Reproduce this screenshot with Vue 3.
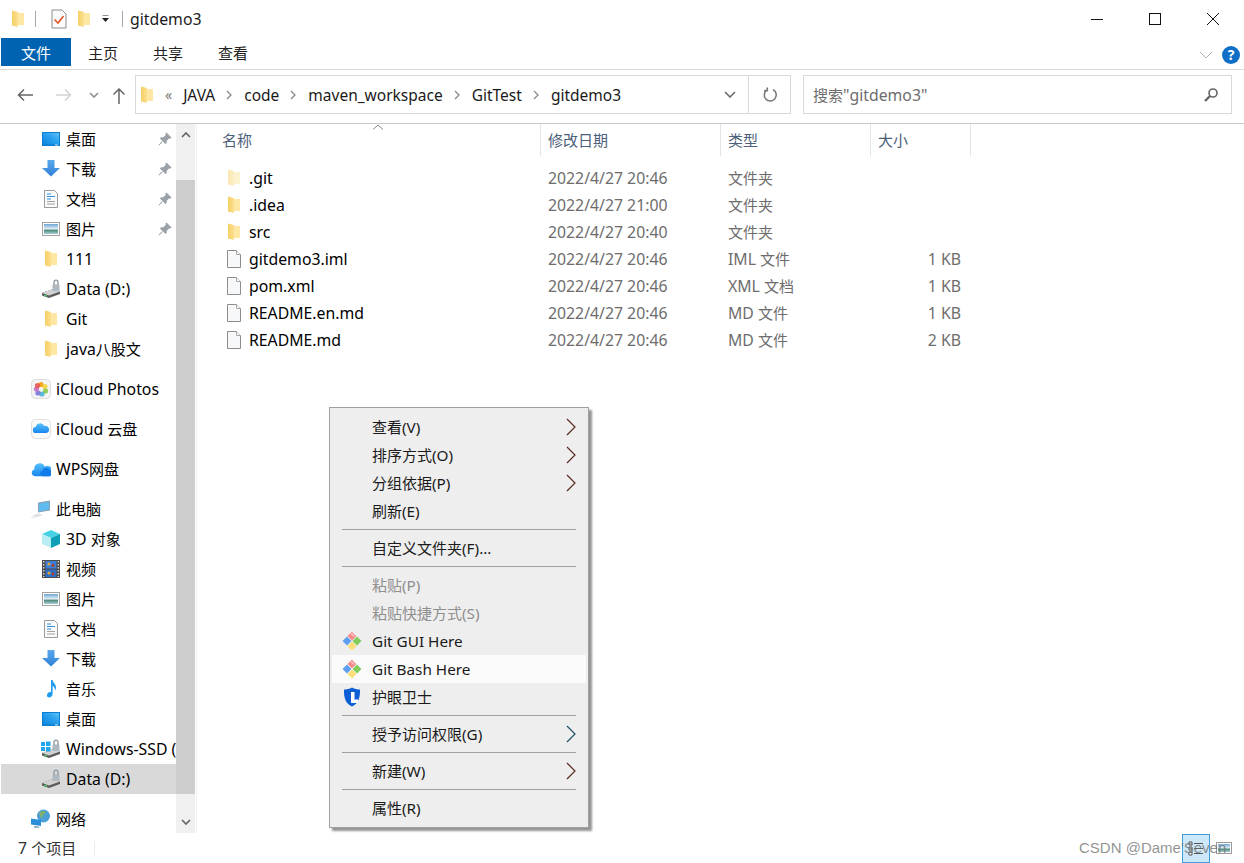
<script setup>
import { h } from "vue";

// latin glyphs are a touch bigger than the CJK ones in the original, so split runs
const T = (props) =>
  (props.s.match(/[\u4e00-\u9fff]+|[^\u4e00-\u9fff]+/g) || []).map((p) =>
    h("span", { class: /[\u4e00-\u9fff]/.test(p) ? "cjk" : "lat" }, p)
  );
T.props = ["s"];

const crumbs = ["JAVA", "code", "maven_workspace", "GitTest", "gitdemo3"];

const navGroups = [
  [
    { label: "桌面", icon: "desktop", indent: 1, pin: true },
    { label: "下载", icon: "down", indent: 1, pin: true },
    { label: "文档", icon: "doc", indent: 1, pin: true },
    { label: "图片", icon: "pic", indent: 1, pin: true },
    { label: "111", icon: "folder", indent: 1 },
    { label: "Data (D:)", icon: "drive", indent: 1 },
    { label: "Git", icon: "folder", indent: 1 },
    { label: "java八股文", icon: "folder", indent: 1 },
  ],
  [{ label: "iCloud Photos", icon: "photos" }],
  [{ label: "iCloud 云盘", icon: "icloud" }],
  [{ label: "WPS网盘", icon: "wps" }],
  [
    { label: "此电脑", icon: "pc" },
    { label: "3D 对象", icon: "cube", indent: 1 },
    { label: "视频", icon: "film", indent: 1 },
    { label: "图片", icon: "pic", indent: 1 },
    { label: "文档", icon: "doc", indent: 1 },
    { label: "下载", icon: "down", indent: 1 },
    { label: "音乐", icon: "music", indent: 1 },
    { label: "桌面", icon: "desktop", indent: 1 },
    { label: "Windows-SSD (C:)", icon: "windrive", indent: 1 },
    { label: "Data (D:)", icon: "drive", indent: 1, selected: true },
  ],
  [{ label: "网络", icon: "network" }],
];

const columns = ["名称", "修改日期", "类型", "大小"];

const files = [
  { name: ".git", date: "2022/4/27 20:46", type: "文件夹", icon: "folder", faded: true },
  { name: ".idea", date: "2022/4/27 21:00", type: "文件夹", icon: "folder" },
  { name: "src", date: "2022/4/27 20:40", type: "文件夹", icon: "folder" },
  { name: "gitdemo3.iml", date: "2022/4/27 20:46", type: "IML 文件", size: "1 KB", icon: "file" },
  { name: "pom.xml", date: "2022/4/27 20:46", type: "XML 文档", size: "1 KB", icon: "file" },
  { name: "README.en.md", date: "2022/4/27 20:46", type: "MD 文件", size: "1 KB", icon: "file" },
  { name: "README.md", date: "2022/4/27 20:46", type: "MD 文件", size: "2 KB", icon: "file" },
];

const menu = [
  { label: "查看(V)", sub: "warm" },
  { label: "排序方式(O)", sub: "warm" },
  { label: "分组依据(P)", sub: "warm" },
  { label: "刷新(E)" },
  { sep: true },
  { label: "自定义文件夹(F)..." },
  { sep: true },
  { label: "粘贴(P)", disabled: true },
  { label: "粘贴快捷方式(S)", disabled: true },
  { label: "Git GUI Here", icon: "git" },
  { label: "Git Bash Here", icon: "git", hover: true },
  { label: "护眼卫士", icon: "shield" },
  { sep: true },
  { label: "授予访问权限(G)", sub: "cool" },
  { sep: true },
  { label: "新建(W)", sub: "warm" },
  { sep: true },
  { label: "属性(R)" },
];
</script>

<template>
  <div class="win">
    <svg class="defs" width="0" height="0" aria-hidden="true">
      <defs>
        <linearGradient id="gBlue" x1="0" y1="0" x2="0" y2="1">
          <stop offset="0" stop-color="#5aa9ec" />
          <stop offset="1" stop-color="#2f7fd8" />
        </linearGradient>
        <linearGradient id="gDesk" x1="0" y1="1" x2="1" y2="0">
          <stop offset="0" stop-color="#0b84dc" />
          <stop offset="0.6" stop-color="#2ea4f0" />
          <stop offset="1" stop-color="#62c0f6" />
        </linearGradient>
        <linearGradient id="gPic" x1="0" y1="0" x2="0" y2="1">
          <stop offset="0" stop-color="#6ea7d6" />
          <stop offset="0.5" stop-color="#e4eef5" />
          <stop offset="0.62" stop-color="#4d8a7a" />
          <stop offset="1" stop-color="#a9cfd6" />
        </linearGradient>
        <linearGradient id="gFold" x1="0" y1="0" x2="1" y2="0">
          <stop offset="0" stop-color="#f6cf66" />
          <stop offset="1" stop-color="#fbe08e" />
        </linearGradient>
        <linearGradient id="gCloud" x1="0" y1="0" x2="0" y2="1">
          <stop offset="0" stop-color="#55c0fa" />
          <stop offset="1" stop-color="#1a86ee" />
        </linearGradient>
      </defs>
      <symbol id="i-folder" viewBox="0 0 20 20">
        <path d="M9 4h7v12H9z" fill="#fde7a3" />
        <path d="M4 1.500 10 3v15l-6-1.500z" fill="url(#gFold)" />
      </symbol>
      <symbol id="i-file" viewBox="0 0 20 20">
        <path d="M3.500 1.500h9l4 4v13h-13z" fill="#f7f8f9" stroke="#8d8d8d" />
        <path d="M12.500 1.500v4h4" fill="#fff" stroke="#a5a5a5" />
      </symbol>
      <symbol id="i-desktop" viewBox="0 0 20 20">
        <rect x="1" y="3" width="18" height="14" fill="#0d7fd2" />
        <rect x="2" y="4" width="16" height="11.500" fill="url(#gDesk)" />
        <path d="M14 16h3" stroke="#cfe9fb" />
      </symbol>
      <symbol id="i-down" viewBox="0 0 20 20">
        <path d="M6.500 1h7v8H19l-9 8.500L1 9h5.500z" fill="url(#gBlue)" />
      </symbol>
      <symbol id="i-doc" viewBox="0 0 20 20">
        <path d="M3.500 1.500h10l3 3v14h-13z" fill="#fbfbfb" stroke="#9a9a9a" />
        <path d="M6 5h4M6 7.500h8M6 10h4" stroke="#2f92e0" stroke-width="1.200" />
        <path d="M6 12.500h8M6 15h8" stroke="#a0a0a0" />
      </symbol>
      <symbol id="i-pic" viewBox="0 0 20 20">
        <rect x="1.500" y="3.500" width="17" height="13" fill="#fff" stroke="#a2a2a2" />
        <rect x="3" y="5" width="14" height="10" fill="url(#gPic)" />
      </symbol>
      <symbol id="i-drive" viewBox="0 0 20 20">
        <path d="M1 14 12 10l7 2.500v2.500L8 19l-7-2.500z" fill="#5c5c5c" />
        <path d="M1 14 12 10l7 2.500L8 16.500z" fill="#d2d2d2" />
        <rect x="3" y="16" width="3" height="1.500" fill="#4fc25f" />
        <rect x="11.500" y="5.500" width="7" height="6.500" rx="1" fill="#aeb8c0" />
        <path d="M13 6V3.200a2 2 0 0 1 4 0V6" fill="none" stroke="#8d979f" stroke-width="1.300" />
      </symbol>
      <symbol id="i-windrive" viewBox="0 0 20 20">
        <use href="#i-drive" width="20" height="20" />
        <path d="M0 3h4v4H0zM5 2.500h4.500V7H5zM0 8h4v4H0zM5 8h4.500v4.500H5z" fill="#22a5ee" />
      </symbol>
      <symbol id="i-photos" viewBox="0 0 20 20">
        <rect x="0.500" y="0.500" width="19" height="19" rx="4" fill="#f4f4f4" stroke="#dddddd" />
        <circle cx="10" cy="5.500" r="2.600" fill="#f6a623" />
        <circle cx="14" cy="7.500" r="2.600" fill="#f3d43c" opacity=".9" />
        <circle cx="14.500" cy="12" r="2.600" fill="#8cc84b" opacity=".9" />
        <circle cx="11" cy="15" r="2.600" fill="#49b6d6" opacity=".9" />
        <circle cx="7" cy="14" r="2.600" fill="#7b76d8" opacity=".9" />
        <circle cx="5.500" cy="10" r="2.600" fill="#c66bc0" opacity=".9" />
        <circle cx="6.500" cy="6.500" r="2.600" fill="#e9534f" opacity=".9" />
      </symbol>
      <symbol id="i-icloud" viewBox="0 0 20 20">
        <rect x="0.500" y="0.500" width="19" height="19" rx="4" fill="#fafafa" stroke="#e0e0e0" />
        <path d="M5 14a3 3 0 0 1-.3-6 4.500 4.500 0 0 1 8.500-1 3.600 3.600 0 0 1 2.300 7z" fill="url(#gCloud)" />
      </symbol>
      <symbol id="i-wps" viewBox="0 2 17.500 15.500">
        <path d="M3.500 16a3 3 0 0 1-.6-5.900A4.800 4.800 0 0 1 12 7.500a4.300 4.300 0 0 1 4.500 8.500z" fill="url(#gCloud)" />
        <path d="M10 16a2.600 2.600 0 0 1 0-5 3.500 3.500 0 0 1 6.600-.3A2.800 2.800 0 0 1 16.500 16z" fill="#0f7ce8" />
      </symbol>
      <symbol id="i-pc" viewBox="0 0 20 20">
        <path d="M7 3.500 19 1.500v10L7 13.500z" fill="#8aa2b4" />
        <path d="M8 4.500 18 3v7.500L8 12.500z" fill="#5fbcf0" />
        <path d="M1 16.500 8 14.500l4 1.500-7 2.500z" fill="#dde1e5" />
        <path d="M0 18h3.500v1H0z" fill="#e6e6e6" />
      </symbol>
      <symbol id="i-cube" viewBox="0 0 20 20">
        <path d="M10 1 19 5 10 9 1 5z" fill="#46d2e4" />
        <path d="M1 5 10 9v10l-9-4z" fill="#b8eef3" />
        <path d="M19 5 10 9v10l9-4z" fill="#0e9fb8" />
      </symbol>
      <symbol id="i-film" viewBox="0 0 20 20">
        <rect x="1" y="1" width="18" height="18" fill="#4a4a4a" />
        <rect x="4.500" y="2" width="11" height="7.500" fill="#3c7fd8" />
        <rect x="4.500" y="10.500" width="11" height="7.500" fill="#2e6fc6" />
        <circle cx="8" cy="5" r="1.600" fill="#e2a23a" />
        <circle cx="12" cy="6.500" r="1.400" fill="#b23a2a" />
        <circle cx="8" cy="14" r="1.600" fill="#e2a23a" />
        <circle cx="12" cy="15" r="1.400" fill="#b23a2a" />
        <path d="M2.700 2v16M17.300 2v16" stroke="#d5d5d5" stroke-dasharray="1.500 1.500" stroke-width="1.400" />
      </symbol>
      <symbol id="i-music" viewBox="0 0 20 20">
        <path d="M10 1h1.600c.4 3 3.400 4 3.400 7.500 0 1-.3 2-1 3 .1-3-1.700-4.300-2.400-4.800V15c0 2.200-1.700 3.500-3.500 3.500S6 17.500 6 16s1.500-3 3-3c.4 0 .7 0 1 .2z" fill="#1f9cf0" />
      </symbol>
      <symbol id="i-network" viewBox="0 0 20 20">
        <circle cx="12.500" cy="7" r="6.500" fill="#4b9fd8" />
        <path d="M9 3c2-1.500 5-1 6 0-1 2-3 2-3 4s-3 2-3 0-2-2 0-4z" fill="#7fb06f" />
        <path d="M0 9.500 10 11v6l-10-1.500z" fill="#2a8fd8" />
        <path d="M3 17h4l2 2H3z" fill="#9cb6c8" />
      </symbol>
      <symbol id="i-pin" viewBox="0 0 14 14">
        <path d="M8.500.5 13.500 5.500 12.300 6.700 11.300 6.200 8.800 8.700 8.700 11 7.500 12.100 1.900 6.500 3 5.300 5.300 5.200 7.800 2.700 7.300 1.700z" fill="#9aa1a8" />
        <path d="M4 9.800 .8 13.200 4.200 10z" fill="#9aa1a8" stroke="#9aa1a8" />
      </symbol>
      <symbol id="i-git" viewBox="0 0 20 20">
        <path d="M10 .5 14.500 5 10 9.500 5.500 5z" fill="#f58a8a" />
        <path d="M9 2.500l3 3M11 1.500l3 3" stroke="#fff" stroke-width="1" />
        <path d="M5 5.500 9.500 10 5 14.500.5 10z" fill="#5e9ff2" />
        <path d="M15 5.500 19.500 10 15 14.500 10.500 10z" fill="#80cc5c" />
        <path d="M10 10.500 14.500 15 10 19.500 5.500 15z" fill="#fbdf78" />
      </symbol>
      <symbol id="i-shield" viewBox="0 0 20 20">
        <path d="M10 .5c2.500 1.500 5.500 2 8 2 .3 8-1.500 14-8 17-6.500-3-8.300-9-8-17 2.500 0 5.500-.5 8-2z" fill="#0d5fd6" />
        <path d="M9 5h3.500v7.500H16V16H9z" fill="#fff" />
      </symbol>
    </svg>

    <header class="titlebar">
      <svg class="qa-folder"><use href="#i-folder" /></svg>
      <i class="vline first"></i>
      <svg class="qa-check" viewBox="0 0 16 20">
        <path d="M1 1h10l4 4v14H1z" fill="#fbfbfb" stroke="#8c8c8c" />
        <path d="M3.500 10.500 7 14l5.500-7" fill="none" stroke="#e2542a" stroke-width="1.700" />
      </svg>
      <svg class="qa-folder second"><use href="#i-folder" /></svg>
      <svg class="qa-drop" viewBox="0 0 9 8">
        <path d="M1.500 0h6" stroke="#222" />
        <path d="M1 3h7L4.500 7z" fill="#222" />
      </svg>
      <i class="vline"></i>
      <span class="wintitle">gitdemo3</span>
      <div class="caption">
        <svg viewBox="0 0 14 14"><path d="M1 7.500h12" stroke="#111" fill="none" /></svg>
        <svg viewBox="0 0 14 14"><rect x="1.500" y="1.500" width="11" height="11" stroke="#111" fill="none" /></svg>
        <svg viewBox="0 0 14 14"><path d="M1 1l12 12M13 1 1 13" stroke="#111" fill="none" /></svg>
      </div>
    </header>

    <div class="ribbon">
      <span class="tab file"><T s="文件" /></span>
      <span class="tab home"><T s="主页" /></span>
      <span class="tab"><T s="共享" /></span>
      <span class="tab"><T s="查看" /></span>
      <svg class="collapse" viewBox="0 0 14 8"><path d="M1 1l6 6 6-6" fill="none" stroke="#b4b4b4" /></svg>
      <span class="help">?</span>
    </div>

    <div class="addressrow">
      <svg class="nav-btn back" viewBox="0 0 16 14"><path d="M16 7H2M7 1.500 1.500 7 7 12.500" fill="none" stroke="#666" stroke-width="1.500" /></svg>
      <svg class="nav-btn fwd" viewBox="0 0 16 14"><path d="M0 7h14M9 1.500 14.500 7 9 12.500" fill="none" stroke="#d2d2d2" stroke-width="1.500" /></svg>
      <svg class="nav-btn drop" viewBox="0 0 10 6"><path d="M1 1l4 4 4-4" fill="none" stroke="#8a8a8a" stroke-width="1.500" /></svg>
      <svg class="nav-btn up" viewBox="0 0 14 17"><path d="M7 17V2M1.500 7.500 7 2l5.500 5.500" fill="none" stroke="#666" stroke-width="1.500" /></svg>
      <div class="addrbox">
        <svg class="addr-folder"><use href="#i-folder" /></svg>
        <span class="overflow">«</span>
        <template v-for="(c, i) in crumbs" :key="c">
          <span class="crumb">{{ c }}</span>
          <svg v-if="i < crumbs.length - 1" class="crumbsep" viewBox="0 0 6 10"><path d="M1 1l4 4-4 4" fill="none" stroke="#8a8a8a" stroke-width="1.300" /></svg>
        </template>
        <span class="grow"></span>
        <svg class="addr-drop" viewBox="0 0 12 7"><path d="M1 1l5 5 5-5" fill="none" stroke="#666" stroke-width="1.500" /></svg>
        <span class="refresh">
          <svg viewBox="0 0 16 16"><path d="M5.200 2.800A6 6 0 1 0 11 2.600M5.300.5v3.200H2" fill="none" stroke="#7a7a7a" stroke-width="1.600" /></svg>
        </span>
      </div>
      <div class="searchbox">
        <span class="placeholder"><T s='搜索"gitdemo3"' /></span>
        <svg viewBox="0 0 16 16"><circle cx="10" cy="6" r="4" fill="none" stroke="#666" stroke-width="1.600" /><path d="M7 9l-5 5" stroke="#666" stroke-width="2.400" /></svg>
      </div>
    </div>

    <main class="body">
      <aside class="side">
        <nav class="tree">
          <div v-for="(group, g) in navGroups" :key="g" class="group">
            <div
              v-for="item in group"
              :key="item.label"
              class="treerow"
              :class="{ indent: item.indent, selected: item.selected }"
            >
              <svg class="treeicon"><use :href="'#i-' + item.icon" /></svg>
              <span class="treelabel"><T :s="item.label" /></span>
              <svg v-if="item.pin" class="pin"><use href="#i-pin" /></svg>
            </div>
          </div>
        </nav>
        <div class="scrollbar">
          <div class="sb-btn top"><svg viewBox="0 0 10 6"><path d="M1 5l4-4 4 4" fill="none" stroke="#606060" stroke-width="1.600" /></svg></div>
          <div class="thumb"></div>
          <div class="sb-btn bottom"><svg viewBox="0 0 10 6"><path d="M1 1l4 4 4-4" fill="none" stroke="#606060" stroke-width="1.600" /></svg></div>
        </div>
      </aside>

      <section class="list">
        <div class="listhead">
          <div v-for="c in columns" :key="c" class="col"><T :s="c" /></div>
          <svg class="sortcaret" viewBox="0 0 12 6"><path d="M1 5.500 6 1l5 4.500" fill="none" stroke="#8a8a8a" /></svg>
        </div>
        <div v-for="f in files" :key="f.name" class="filerow">
          <div class="fname">
            <svg class="fileicon" :class="{ faded: f.faded }"><use :href="'#i-' + f.icon" /></svg>
            <span>{{ f.name }}</span>
          </div>
          <div class="dim">{{ f.date }}</div>
          <div class="dim"><T :s="f.type" /></div>
          <div class="dim fsize">{{ f.size }}</div>
        </div>
      </section>
    </main>

    <footer class="status">
      <span class="count"><T s="7 个项目" /></span>
      <i class="statussep"></i>
      <span class="grow"></span>
      <span class="viewbtn on">
        <svg viewBox="0 0 16 16"><path d="M1 2h3v3H1zM1 7h3v3H1zM1 12h3v3H1z" fill="#fff" stroke="#555" /><path d="M6 3.500h9M6 8.500h9M6 13.500h9" stroke="#555" /></svg>
      </span>
      <span class="viewbtn">
        <svg viewBox="0 0 16 16"><rect x="0.500" y="2.500" width="15" height="11" fill="#fff" stroke="#999" /><rect x="2" y="4" width="12" height="8" fill="url(#gPic)" /></svg>
      </span>
    </footer>

    <div class="ctxmenu">
      <template v-for="(m, i) in menu" :key="i">
        <div v-if="m.sep" class="menusep"></div>
        <div v-else class="menuitem" :class="{ disabled: m.disabled, hover: m.hover }">
          <svg v-if="m.icon" class="menuicon"><use :href="'#i-' + m.icon" /></svg>
          <span class="menulabel"><T :s="m.label" /></span>
          <svg v-if="m.sub" class="submark" :class="m.sub" viewBox="0 0 10 18"><path d="M1 1l8 8-8 8" fill="none" stroke-width="1.200" /></svg>
        </div>
      </template>
    </div>

    <div class="watermark">CSDN @Dame'Seven</div>
  </div>
</template>

<style>
body {
  margin: 0;
  background: #fff;
}
.lat {
  font-size: 15.8px;
}
.cjk {
  font-size: 15px;
}
.ctxmenu .lat {
  font-size: 15.3px;
}
</style>

<style scoped>
.win {
  position: relative;
  width: 1244px;
  height: 863px;
  overflow: hidden;
  display: flex;
  flex-direction: column;
  background: #fff;
  color: #000;
  font-family: "Noto Sans", "Noto Sans CJK SC", sans-serif;
  font-size: 15.8px;
  line-height: 20px;
}

.defs {
  position: absolute;
}

.grow {
  flex: 1;
}

/* title bar */
.titlebar {
  height: 38px;
  display: flex;
  align-items: center;
  flex-shrink: 0;
  padding-left: 8px;
  color: #1a1a1a;
}

.qa-folder {
  width: 20px;
  height: 20px;
}

.qa-folder.second {
  margin-left: 7px;
}

.qa-check {
  width: 16px;
  height: 20px;
  margin-left: 15px;
}

.qa-drop {
  width: 9px;
  height: 8px;
  margin-left: 7px;
}

.vline {
  width: 1px;
  height: 16px;
  margin-left: 12px;
  background: #a8a8a8;
}

.vline.first {
  margin-left: 7px;
}

.wintitle {
  margin-left: 7px;
}

.caption {
  margin-left: auto;
  display: flex;
  align-items: center;
  gap: 44px;
  padding-right: 24px;
}

.caption svg {
  width: 14px;
  height: 14px;
}

/* ribbon */
.ribbon {
  height: 32px;
  padding-left: 1px;
  box-sizing: border-box;
  border-bottom: 1px solid #dadada;
  display: flex;
  align-items: flex-start;
  flex-shrink: 0;
}

.tab {
  height: 28px;
  line-height: 30px;
  width: 65px;
  color: #222;
  display: block;
}

.tab.file {
  width: 70px;
  text-align: center;
  background: #0063b1;
  color: #fff;
}

.tab.home {
  margin-left: 17px;
}

.collapse {
  width: 14px;
  height: 8px;
  margin: 13px 0 0 auto;
}

.help {
  width: 18px;
  height: 18px;
  margin: 8px 4px 0 9px;
  border-radius: 50%;
  background: #0f6fc6;
  color: #fff;
  font-size: 14px;
  font-weight: 700;
  line-height: 18px;
  text-align: center;
}

/* address row */
.addressrow {
  height: 54px;
  box-sizing: border-box;
  border-bottom: 1px solid #c8c8c8;
  padding-top: 5px;
  display: flex;
  align-items: flex-start;
  flex-shrink: 0;
  position: relative;
}

.nav-btn {
  flex-shrink: 0;
  margin-top: 13px;
}

.nav-btn.back {
  width: 16px;
  height: 14px;
  margin-left: 17px;
}

.nav-btn.fwd {
  width: 16px;
  height: 14px;
  margin-left: 23px;
}

.nav-btn.drop {
  width: 10px;
  height: 6px;
  margin: 17px 0 0 17px;
}

.nav-btn.up {
  width: 14px;
  height: 17px;
  margin: 12px 0 0 13px;
}

.addrbox {
  margin-left: 9px;
  width: 656px;
  height: 39px;
  box-sizing: border-box;
  border: 1px solid #d9d9d9;
  display: flex;
  align-items: center;
  padding-left: 1px;
}

.addr-folder {
  width: 20px;
  height: 20px;
  flex-shrink: 0;
}

.overflow {
  margin: 0 11px 0 8px;
  color: #777;
  font-size: 14px;
  line-height: 18px;
}

.crumb {
  color: #1a1a1a;
  font-size: 15.5px;
}

.crumbsep {
  width: 6px;
  height: 10px;
  margin: 0 12px 0 11px;
}

.addr-drop {
  width: 12px;
  height: 7px;
  margin-right: 12px;
}

.refresh {
  width: 41px;
  height: 37px;
  border-left: 1px solid #d9d9d9;
  display: flex;
  align-items: center;
  justify-content: center;
}

.refresh svg {
  width: 16px;
  height: 16px;
}

.searchbox {
  margin-left: 12px;
  width: 429px;
  height: 39px;
  box-sizing: border-box;
  border: 1px solid #d9d9d9;
  display: flex;
  align-items: center;
  justify-content: space-between;
  padding: 0 12px 0 9px;
  color: #6d6d6d;
}

.searchbox svg {
  width: 16px;
  height: 16px;
}

/* main */
.body {
  flex: 1;
  min-height: 0;
  display: flex;
}

.side {
  width: 197px;
  flex-shrink: 0;
  display: flex;
  box-sizing: border-box;
  border-right: 1px solid #f0f0f0;
}

.tree {
  width: 176px;
  overflow: hidden;
  padding-left: 1px;
  box-sizing: border-box;
}

.group + .group {
  margin-top: 10px;
}

.treerow {
  height: 30px;
  display: flex;
  align-items: center;
  padding-left: 30px;
  white-space: nowrap;
  position: relative;
  overflow: hidden;
}

.treerow.indent {
  padding-left: 40px;
}

.treerow.selected {
  background: #d9d9d9;
}

.treeicon {
  width: 20px;
  height: 20px;
  flex-shrink: 0;
}

.treelabel {
  margin-left: 5px;
}

.pin {
  position: absolute;
  right: 4px;
  top: 8px;
  width: 14px;
  height: 14px;
}

.scrollbar {
  width: 19px;
  display: flex;
  flex-direction: column;
  background: #f0f0f0;
}

.sb-btn {
  display: flex;
  justify-content: center;
  flex-shrink: 0;
  box-sizing: border-box;
}

.sb-btn svg {
  width: 10px;
  height: 6px;
}

.sb-btn.top {
  height: 56px;
  padding-top: 8px;
}

.sb-btn.bottom {
  height: 39px;
  padding-top: 25px;
}

.thumb {
  flex: 1;
  background: #cdcdcd;
}

/* file list */
.list {
  flex: 1;
  padding-left: 17px;
}

.listhead {
  height: 32px;
  display: grid;
  grid-template-columns: 327px 180px 150px 100px;
  width: 757px;
  margin-bottom: 8px;
  position: relative;
}

.col {
  padding: 6px 0 0 7px;
  border-right: 1px solid #e5e5e5;
  color: #4c607a;
}

.col:first-child {
  padding-left: 8px;
}

.sortcaret {
  position: absolute;
  left: 158px;
  top: 0;
  width: 12px;
  height: 6px;
}

.filerow {
  height: 27px;
  display: grid;
  grid-template-columns: 327px 180px 150px 100px;
  width: 757px;
  align-items: center;
}

.fname {
  display: flex;
  align-items: center;
  padding-left: 10px;
}

.fname span {
  margin-left: 5px;
}

.fileicon {
  width: 20px;
  height: 20px;
  flex-shrink: 0;
}

.fileicon.faded {
  opacity: 0.5;
}

.dim {
  color: #6d6d6d;
  padding-left: 7px;
  white-space: nowrap;
}

.fsize {
  text-align: right;
  padding-right: 10px;
}

/* status bar */
.status {
  height: 30px;
  flex-shrink: 0;
  display: flex;
  align-items: center;
  padding-left: 18px;
  padding-right: 6px;
  color: #333;
}

.statussep {
  width: 1px;
  height: 15px;
  margin-left: 18px;
  background: #ececec;
}

.viewbtn {
  width: 28px;
  height: 29px;
  box-sizing: border-box;
  display: flex;
  align-items: center;
  justify-content: center;
}

.viewbtn svg {
  width: 16px;
  height: 16px;
}

.viewbtn.on {
  background: #cce8f8;
  border: 1px solid #3d9fdc;
}

/* context menu */
.ctxmenu {
  position: absolute;
  left: 329px;
  top: 407px;
  width: 260px;
  box-sizing: border-box;
  padding: 5px 2px;
  background: #eeeeee;
  border: 1px solid #a0a0a0;
  box-shadow: 3px 3px 2px rgba(0, 0, 0, 0.42);
}

.menuitem {
  height: 28px;
  display: flex;
  align-items: center;
  padding-left: 40px;
  position: relative;
  color: #1a1a1a;
  white-space: nowrap;
}

.menuitem.hover {
  background: #fbfbfb;
}

.menuitem.disabled {
  color: #8f8f8f;
}

.menusep {
  height: 1px;
  margin: 4px 10px;
  background: #a0a0a0;
}

.menuicon {
  position: absolute;
  left: 10px;
  top: 4px;
  width: 20px;
  height: 20px;
}

.submark {
  position: absolute;
  right: 10px;
  top: 5px;
  width: 10px;
  height: 18px;
}

.submark.warm path {
  stroke: #5a2a22;
}

.submark.cool path {
  stroke: #1f5068;
}

.watermark {
  position: absolute;
  left: 1079px;
  top: 838px;
  font-family: "Liberation Sans", sans-serif;
  font-size: 15px;
  color: rgba(110, 110, 110, 0.75);
  white-space: nowrap;
}
</style>
